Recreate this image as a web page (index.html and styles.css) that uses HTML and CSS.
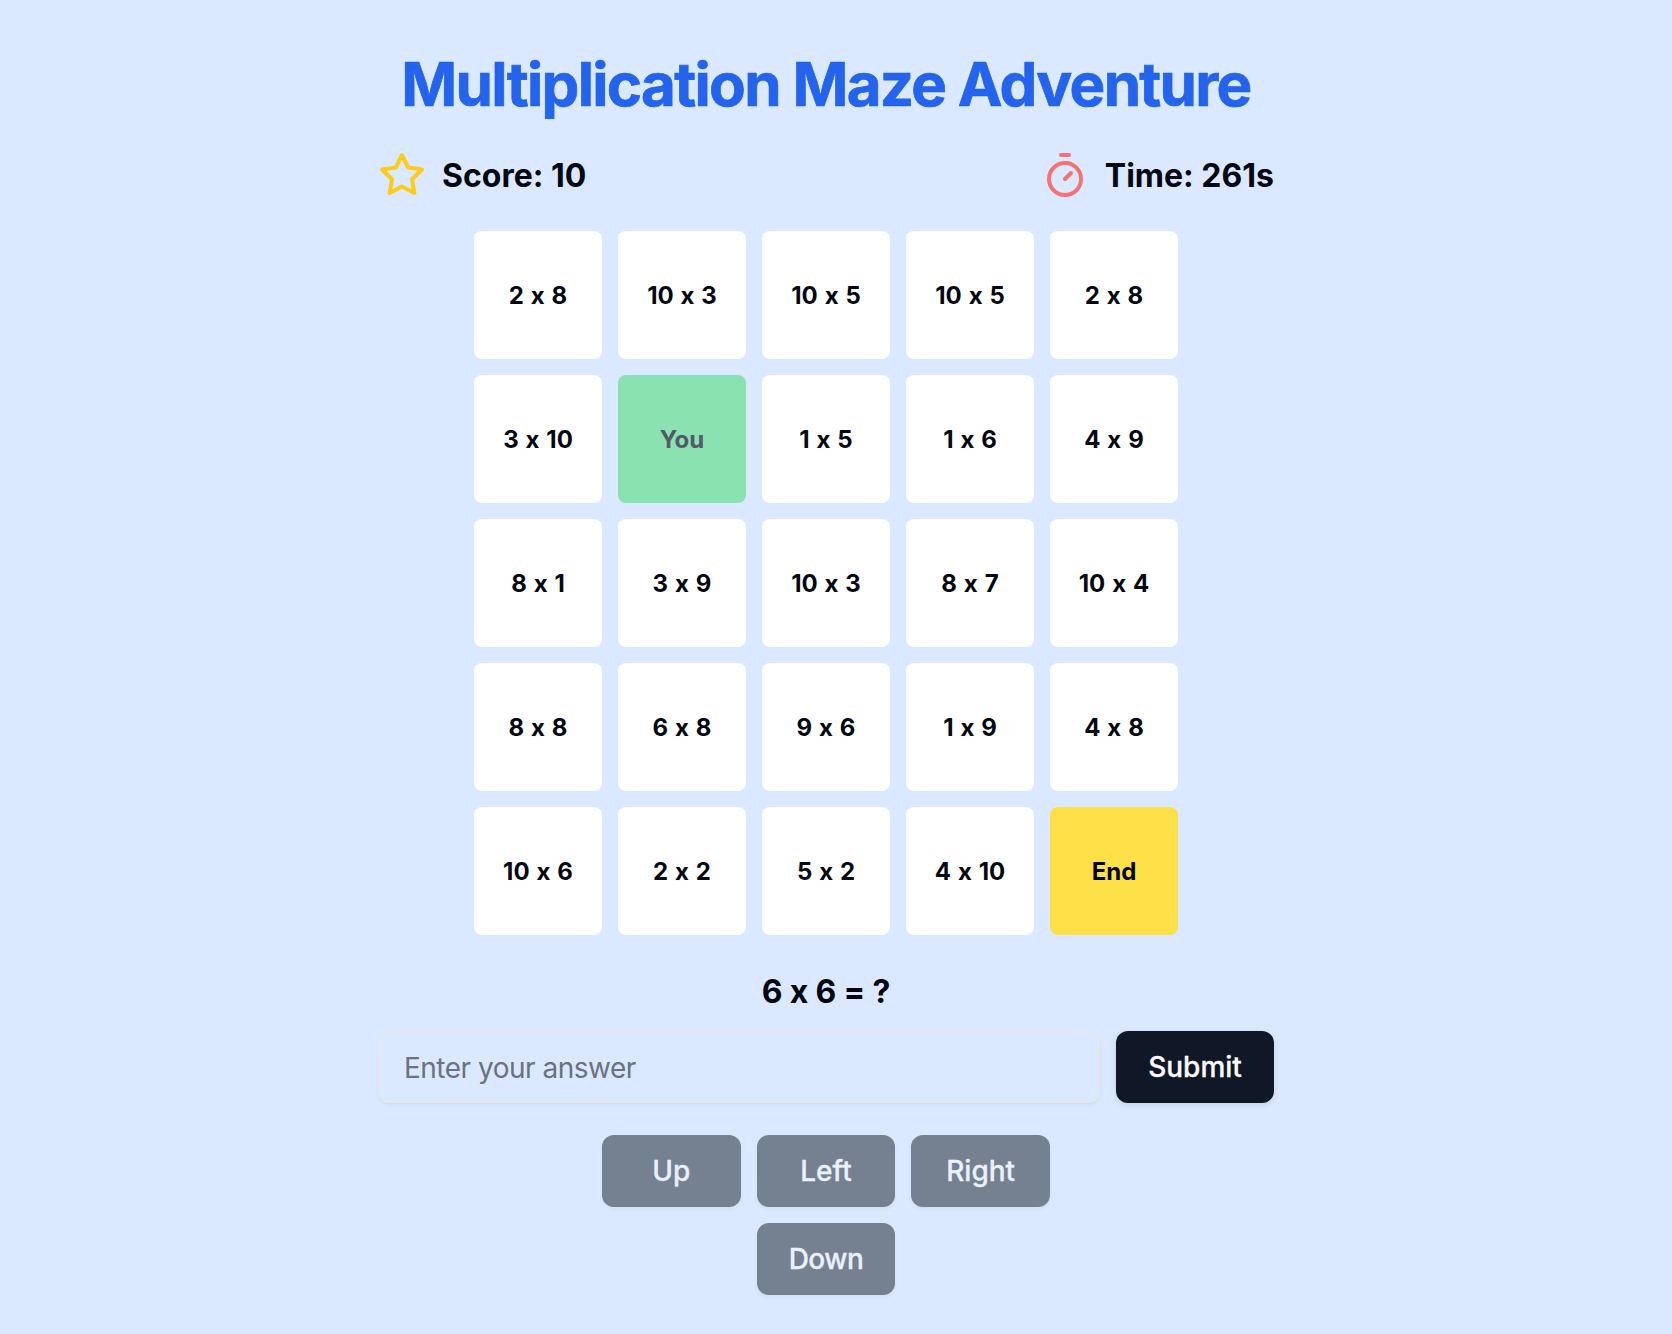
FILE: index.html
```
<!DOCTYPE html>
<html lang="en">
<head>
    <meta charset="UTF-8">
    <meta name="viewport" content="width=device-width, initial-scale=1.0">
    <title>Multiplication Maze Adventure</title>
    <link rel="stylesheet" href="styles.css">
</head>
<body>
    <div class="container">
        <h1>Multiplication Maze Adventure</h1>

        <div class="stats">
            <div class="stat">
                <svg class="icon star" viewBox="0 0 24 24">
                    <polygon points="12 2 15.09 8.26 22 9.27 17 14.14 18.18 21.02 12 17.77 5.82 21.02 7 14.14 2 9.27 8.91 8.26 12 2"/>
                </svg>
                <span>Score: 10</span>
            </div>
            <div class="stat">
                <svg class="icon timer" viewBox="0 0 24 24">
                    <line x1="10" x2="14" y1="2" y2="2"/>
                    <line x1="12" x2="15" y1="14" y2="11"/>
                    <circle cx="12" cy="14" r="8"/>
                </svg>
                <span>Time: 261s</span>
            </div>
        </div>

        <div class="maze">
            <div class="cell">2 x 8</div>
            <div class="cell">10 x 3</div>
            <div class="cell">10 x 5</div>
            <div class="cell">10 x 5</div>
            <div class="cell">2 x 8</div>

            <div class="cell">3 x 10</div>
            <div class="cell you">You</div>
            <div class="cell">1 x 5</div>
            <div class="cell">1 x 6</div>
            <div class="cell">4 x 9</div>

            <div class="cell">8 x 1</div>
            <div class="cell">3 x 9</div>
            <div class="cell">10 x 3</div>
            <div class="cell">8 x 7</div>
            <div class="cell">10 x 4</div>

            <div class="cell">8 x 8</div>
            <div class="cell">6 x 8</div>
            <div class="cell">9 x 6</div>
            <div class="cell">1 x 9</div>
            <div class="cell">4 x 8</div>

            <div class="cell">10 x 6</div>
            <div class="cell">2 x 2</div>
            <div class="cell">5 x 2</div>
            <div class="cell">4 x 10</div>
            <div class="cell end">End</div>
        </div>

        <p class="question">6 x 6 = ?</p>

        <form class="answer-form">
            <input type="text" class="answer" placeholder="Enter your answer">
            <button type="button" class="btn submit">Submit</button>
        </form>

        <div class="controls">
            <button class="btn" disabled>Up</button>
            <button class="btn" disabled>Left</button>
            <button class="btn" disabled>Right</button>
            <button class="btn down" disabled>Down</button>
        </div>
    </div>
</body>
</html>
```
FILE: styles.css
```
* {
    box-sizing: border-box;
}
body {
    font-family: Inter, sans-serif;
    /* keep the "x" between numbers a plain letter */
    font-feature-settings: "calt" 0;
    background-color: #dae9ff;
    color: #030712;
    margin: 0;
    padding: 48px 20px 39px 0;
}
.container {
    width: 896px;
    margin: 0 auto;
}
h1 {
    font-size: 60px;
    line-height: 72px;
    font-weight: 700;
    letter-spacing: -0.028em;
    text-align: center;
    white-space: nowrap;
    color: #2463eb;
    -webkit-text-stroke: 0.7px #2463eb;
    margin: 0 0 31px;
}
.stats {
    display: flex;
    justify-content: space-between;
    margin-bottom: 32px;
}
.stat {
    display: flex;
    align-items: center;
    gap: 16px;
    height: 48px;
    font-size: 32px;
    line-height: 48px;
    font-weight: 700;
}
.stat span {
    padding-top: 2px;
}
.icon {
    width: 48px;
    height: 48px;
    fill: none;
    stroke-width: 2;
    stroke-linecap: round;
    stroke-linejoin: round;
}
.star {
    stroke: #fccc16;
}
.timer {
    stroke: #f87171;
}
.maze {
    display: grid;
    grid-template-columns: repeat(5, 128px);
    grid-auto-rows: 128px;
    gap: 16px;
    justify-content: center;
    margin-bottom: 32px;
}
.cell {
    display: flex;
    align-items: center;
    justify-content: center;
    padding-top: 1px;
    background-color: #fff;
    border-radius: 8px;
    font-size: 24px;
    font-weight: 700;
    word-spacing: 1.2px;
}
.you {
    background-color: #89e2af;
    color: #525a69;
}
.end {
    background-color: #fde047;
}
.question {
    font-size: 32px;
    line-height: 48px;
    font-weight: 700;
    letter-spacing: -0.15px;
    text-align: center;
    padding-top: 1px;
    margin: 0 0 15px;
}
.answer-form {
    display: flex;
    gap: 16px;
    margin-bottom: 32px;
}
.answer {
    flex: 1;
    min-width: 0;
    height: 72px;
    padding: 2px 24px 0;
    border: 2px solid #e5e7eb;
    border-radius: 12px;
    background: transparent;
    font-family: inherit;
    font-size: 28px;
    letter-spacing: -0.5px;
    box-shadow: 0 2px 4px rgba(0, 0, 0, 0.05);
}
.answer::placeholder {
    color: #6b7280;
    opacity: 1;
}
.btn {
    height: 72px;
    padding: 0;
    border: none;
    border-radius: 12px;
    background-color: #758091;
    color: #eaf1fd;
    font-family: inherit;
    font-size: 28px;
    font-weight: 500;
    -webkit-text-stroke: 0.3px currentColor;
    box-shadow: 0 2px 4px rgba(0, 0, 0, 0.05);
}
.submit {
    width: 158px;
    background-color: #101726;
    color: #f9fafb;
    box-shadow: 0 2px 6px rgba(0, 0, 0, 0.1);
}
.controls {
    display: grid;
    grid-template-columns: repeat(3, 1fr);
    gap: 16px;
    width: 448px;
    margin: 0 auto;
}
.down {
    grid-column: 2;
    letter-spacing: -0.5px;
}
```
